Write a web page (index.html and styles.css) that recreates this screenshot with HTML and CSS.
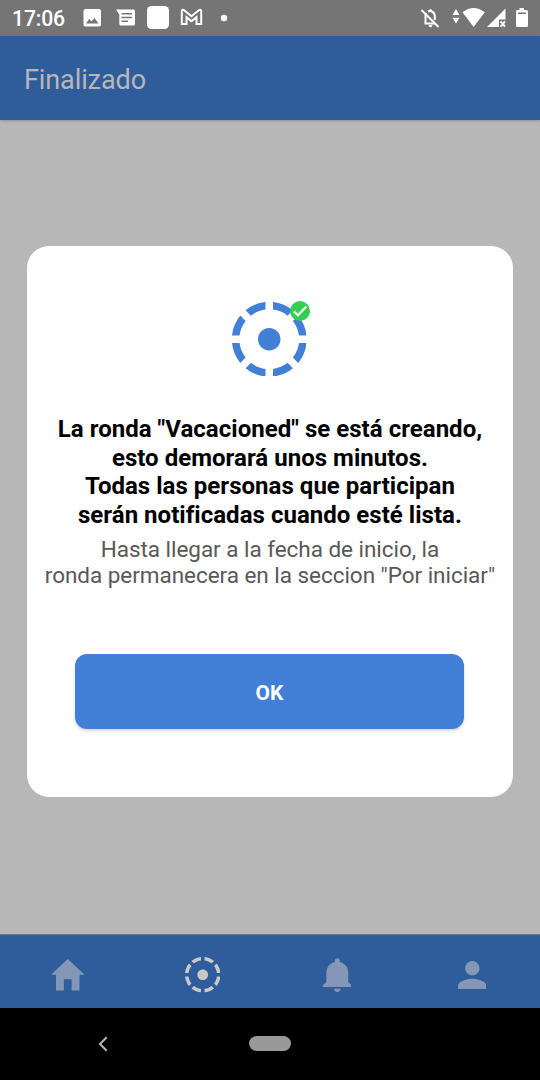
FILE: index.html
```html
<!DOCTYPE html>
<html lang="es">
<head>
<meta charset="utf-8">
<title>Finalizado</title>
<link rel="stylesheet" href="styles.css">
</head>
<body>
<svg width="0" height="0" class="defs">
  <symbol id="ring" viewBox="2.05 2.05 19.9 19.9"><path d="M11 4.07V2.05c-2.01.2-3.84 1-5.32 2.21L7.1 5.69c1.11-.86 2.44-1.44 3.9-1.62zm7.32.19C16.84 3.05 15.01 2.25 13 2.05v2.02c1.46.18 2.79.76 3.9 1.62l1.42-1.43zM19.93 11h2.02c-.2-2.01-1-3.84-2.21-5.32L18.31 7.1c.86 1.11 1.44 2.44 1.62 3.9zM5.69 7.1L4.26 5.68C3.05 7.16 2.25 8.99 2.05 11h2.02c.18-1.46.76-2.79 1.62-3.9zM4.07 13H2.05c.2 2.01 1 3.84 2.21 5.32l1.43-1.43c-.86-1.1-1.44-2.43-1.62-3.89zM15 12c0-1.66-1.34-3-3-3s-3 1.34-3 3 1.34 3 3 3 3-1.34 3-3zm3.31 4.9l1.43 1.43c1.21-1.48 2.01-3.32 2.21-5.33h-2.02c-.18 1.46-.76 2.79-1.62 3.9zM13 19.93v2.02c2.01-.2 3.84-1 5.32-2.21l-1.43-1.43c-1.1.86-2.43 1.44-3.89 1.62zm-7.32-.19C7.16 20.95 9 21.75 11 21.95v-2.02c-1.46-.18-2.79-.76-3.9-1.62l-1.42 1.43z"/></symbol>
</svg>
<div class="screen">
  <header class="status">
    <span class="clock">17:06</span>
    <svg class="status-icons" viewBox="0 0 540 36" width="540" height="36">
      <path fill-rule="evenodd" d="M85.500 9H99Q101 9 101 11V24.500Q101 26.500 99 26.500H85.500Q83.500 26.500 83.500 24.500V11Q83.500 9 85.500 9zM86 23.500H98.500L94.500 18L91.500 21.500L89.200 19z"/>
      <path fill-rule="evenodd" d="M116 9.500H133.500Q135 9.500 135 11V24Q135 25.500 133.500 25.500H121Q119.300 25.500 119.300 24V14.500zM121.500 13V14.500H132V13zM121.500 16.700V18.200H132V16.700zM121.500 20.400V21.900H128V20.400z"/>
      <rect x="147" y="6" width="22" height="23" rx="4.500"/>
      <path class="line" d="M181.800 24V11.500Q181.800 9 184.200 10.300L191.500 16.300L198.800 10.300Q201.200 9 201.200 11.500V24H196.500V17.200L191.500 21.200L186.500 17.200V24z"/>
      <circle cx="224" cy="18" r="3.200"/>
      <path class="line" d="M424.500 23.500H435.500M425.500 23V15.500Q425.500 14 426.300 13M428 11.500Q430 10.500 432 11.500Q434.800 12.800 434.800 16V20"/>
      <rect x="429" y="9" width="3" height="3" rx="1.500"/><path d="M428.500 25H432.500Q432 27.200 430.500 27.200T428.500 25z"/>
      <path class="line" d="M421.500 10L438.500 27"/>
      <path d="M456 9L459.500 14.900H452.500zM452.500 17.700H459.500L456 23.600zM462.500 12.300Q473.500 3.800 484.800 12.300L473.600 27z"/>
      <path d="M505.500 8.500V19.500H499V27H487z"/>
      <path class="line" d="M500.600 21.300L505 26.700M505 21.300L500.600 26.700"/>
      <path fill-rule="evenodd" d="M519.500 8H524V10H526.500Q528 10 528 11.500V25.500Q528 27 526.500 27H517.500Q516 27 516 25.500V11.500Q516 10 517.500 10H519.500zM518 12.600V14H526V12.600z"/>
    </svg>
  </header>
  <div class="appbar">Finalizado</div>
  <main class="content">
    <section class="modal">
      <div class="emblem">
        <svg class="emblem-ring"><use href="#ring"/></svg>
        <svg class="check" viewBox="0 0 20 20"><circle cx="10" cy="10" r="10"/><path d="M3.700 10.400L8 14.300L16.300 5.600"/></svg>
      </div>
      <h1 class="heading">La ronda "Vacacioned" se está creando,<br>esto demorará unos minutos.<br>Todas las personas que participan<br>serán notificadas cuando esté lista.</h1>
      <p class="note">Hasta llegar a la fecha de inicio, la<br>ronda permanecera en la seccion "Por iniciar"</p>
      <button class="ok">OK</button>
    </section>
  </main>
  <nav class="tabs">
    <div class="tab"><svg width="33.500" height="31.500" viewBox="48 64 416 384" preserveAspectRatio="none"><path d="M208 448V312h96v136h97.600V256H464L256 64 48 256h62.400v192z"/></svg></div>
    <div class="tab active"><svg width="35.500" height="35.500"><use href="#ring"/></svg></div>
    <div class="tab"><svg width="28.600" height="34.400" viewBox="80 48 352 416"><path d="M256 464c22.779 0 41.411-18.719 41.411-41.600h-82.823c0 22.881 18.633 41.600 41.412 41.600zm134.589-124.800V224.800c0-63.440-44.516-117.518-103.530-131.041V79.200c0-17.682-13.457-31.200-31.059-31.200s-31.059 13.518-31.059 31.200v14.559c-59.015 13.523-103.530 67.601-103.530 131.041v114.400L80 380.800v20.800h352v-20.800l-41.411-41.600z"/></svg></div>
    <div class="tab"><svg width="28.600" height="28.600" viewBox="64 64 384 384"><path d="M256 256c52.805 0 96-43.201 96-96s-43.195-96-96-96-96 43.201-96 96 43.195 96 96 96zm0 48c-63.598 0-192 32.402-192 96v48h384v-48c0-63.598-128.402-96-192-96z"/></svg></div>
  </nav>
  <footer class="system">
    <svg class="back" width="10" height="16" viewBox="0 0 10 16"><path d="M8.700 1.300L2 8L8.700 14.700"/></svg>
    <span class="pill"></span>
  </footer>
</div>
</body>
</html>
```
FILE: styles.css
```css
* { box-sizing: border-box; }
body { margin: 0; font-family: Roboto, "Liberation Sans", sans-serif; }
.defs { position: absolute; }
.screen { width: 540px; height: 1080px; display: flex; flex-direction: column; background: #b7b7b7; overflow: hidden; }
.status { display: grid; height: 36px; background: #757575; color: #fff; align-items: center; }
.clock { grid-area: 1 / 1; padding: 2px 0 0 12px; font-size: 21.2px; line-height: 34px; font-weight: 500; letter-spacing: -.15px; }
.status-icons { grid-area: 1 / 1; fill: #fff; }
.status-icons .line { fill: none; stroke: #fff; stroke-width: 2; }
.appbar { height: 84px; background: #2f5d9b; color: #b7b7b7; font-size: 27px; line-height: 88px; letter-spacing: -.1px; padding-left: 24px; box-shadow: 0 1px 2px rgba(0,0,0,.2); }
.content { height: 814px; padding: 126px 27px 0; }
.modal { height: 551px; background: #fff; border-radius: 22px; display: flex; flex-direction: column; align-items: center; padding-top: 55.500px; }
.emblem { position: relative; width: 74.500px; height: 74.500px; margin-right: .8px; }
.emblem-ring { display: block; width: 74.500px; height: 74.500px; fill: #427fd6; }
.check { position: absolute; left: 57.300px; top: -1px; width: 20px; height: 20px; fill: #35ce4f; }
.check path { fill: none; stroke: #fff; stroke-width: 2.200; }
.heading { margin: 39px 0 0; font-size: 24px; line-height: 28.600px; font-weight: 700; letter-spacing: .03px; color: #000; text-align: center; white-space: nowrap; }
.note { margin: 6.500px 0 0; font-size: 22.500px; line-height: 26.500px; letter-spacing: -.04px; color: #585858; text-align: center; white-space: nowrap; }
.ok { margin: 65.600px 1px 0 0; width: 389px; height: 75px; border: 0; border-radius: 12px; background: #427fd6; color: #fff; font: 700 21px Roboto, sans-serif; box-shadow: 0 2px 3px rgba(40,60,110,.2); padding: 2px 0 0; }
.tabs { height: 74px; display: grid; grid-template-columns: repeat(4, 1fr); background: #2f5d9b; border-top: 1px solid #6f7b8d; padding: 8px .6px 1px 0; }
.tab { display: flex; align-items: center; justify-content: center; fill: #8497b6; }
.tab.active { fill: #c9c9c9; }
.system { height: 72px; background: #000; display: flex; align-items: center; padding: 0 0 1px 98px; }
.back { fill: none; stroke: #b5b5b5; stroke-width: 2; }
.pill { width: 42px; height: 15px; border-radius: 8px; background: #999; margin-left: 141px; }
```
